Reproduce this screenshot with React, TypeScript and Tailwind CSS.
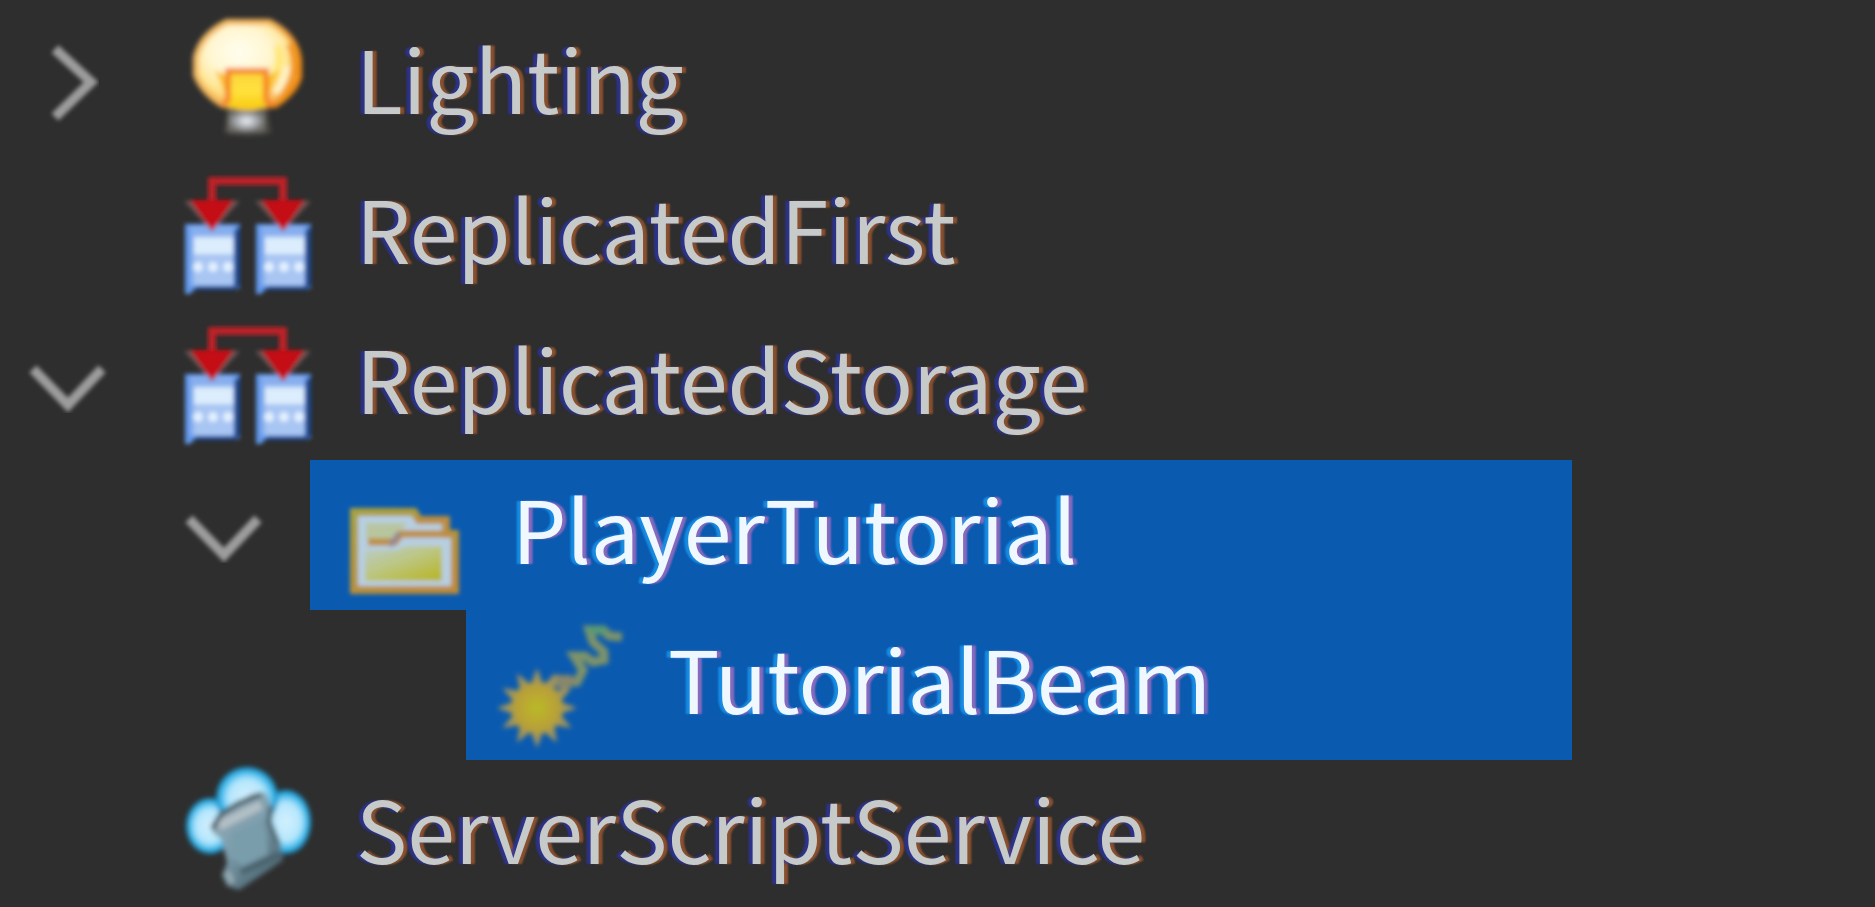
import { useState, type ReactNode } from "react";

type TreeNode = {
  name: string;
  icon: ReactNode;
  selected?: boolean;
  children?: TreeNode[];
  startOpen?: boolean;
};

const iconClass = "h-[126px] w-[126px] shrink-0 overflow-visible";

function BulbIcon() {
  return (
    <svg className={iconClass} viewBox="0 0 126 126" aria-hidden="true">
      <defs>
        <radialGradient id="bulbGlass" cx="0.42" cy="0.36" r="0.62">
          <stop offset="0" stopColor="#fffdf0" />
          <stop offset="0.5" stopColor="#fff6cf" />
          <stop offset="0.8" stopColor="#fee48c" />
          <stop offset="1" stopColor="#fbc060" />
        </radialGradient>
        <linearGradient id="bulbRim" x1="0" y1="0" x2="1" y2="0.5">
          <stop offset="0" stopColor="#f2bd6c" />
          <stop offset="0.6" stopColor="#f4b455" />
          <stop offset="1" stopColor="#ee8a18" />
        </linearGradient>
        <linearGradient id="bulbCore" x1="0" y1="0" x2="0" y2="1">
          <stop offset="0" stopColor="#fbd23c" />
          <stop offset="0.5" stopColor="#ffe23e" />
          <stop offset="1" stopColor="#f8c80c" />
        </linearGradient>
        <radialGradient id="bulbBase">
          <stop offset="0" stopColor="#f2f4fa" />
          <stop offset="0.5" stopColor="#b0b3b8" />
          <stop offset="1" stopColor="#6c6b67" />
        </radialGradient>
        <filter id="softBulb" x="-10%" y="-10%" width="120%" height="120%">
          <feGaussianBlur stdDeviation="2.4" />
        </filter>
      </defs>
      <g filter="url(#softBulb)">
        <path d="M43 91H82L86 117Q62 122 39 117Z" fill="#4c4a43" />
        <rect x="43" y="94" width="37" height="22" rx="3" fill="url(#bulbBase)" />
        <path
          d="M42 6H84Q111 19 114 44V61Q110 76 90 89H38Q18 77 11 59V41Q17 18 42 6Z"
          fill="url(#bulbGlass)"
          stroke="url(#bulbRim)"
          strokeWidth="6"
        />
        <path d="M104 28Q118 58 92 86" fill="none" stroke="#f39a22" strokeWidth="6" />
        <path d="M102 50Q100 66 90 77" fill="none" stroke="#fff3c5" strokeWidth="7" />
        <path d="M92 30Q98 48 88 62" fill="none" stroke="#ffe773" strokeWidth="7" />
        <path d="M30 54L43 60V84Z M95 54L82 60V84Z" fill="#fcc12c" />
        <path d="M43 55H81V91Q62 98 43 91Z" fill="url(#bulbCore)" />
        <path d="M37 89L43 84V55H81V84L89 89" fill="none" stroke="#f5872c" strokeWidth="6" />
      </g>
    </svg>
  );
}

function ServerBox({ x }: { x: number }) {
  return (
    <g transform={`translate(${x} 0)`}>
      <path d="M0 58H55V122L49 124H9L5 128H0Z" fill="#5e97ea" />
      <path d="M48 66L55 60V120L50 124H8L12 120H48Z" fill="#1d4991" />
      <rect x="5" y="60" width="44" height="60" fill="#86adee" />
      <rect x="9" y="69" width="39" height="50" fill="#a9c6f3" />
      <rect x="9" y="72" width="39" height="16" fill="#dcedfd" />
      <circle cx="13" cy="101" r="5" fill="#e2f0ff" />
      <circle cx="28" cy="101" r="5" fill="#e2f0ff" />
      <circle cx="43" cy="101" r="5" fill="#e2f0ff" />
    </g>
  );
}

function ReplicatedIcon() {
  return (
    <svg className={iconClass} viewBox="0 0 126 126" aria-hidden="true">
      <defs>
        <filter id="softBox" x="-10%" y="-10%" width="120%" height="125%">
          <feGaussianBlur stdDeviation="2" />
        </filter>
      </defs>
      <g filter="url(#softBox)">
        <ServerBox x={0} />
        <ServerBox x={71} />
        <path d="M27 40V15H98V40" fill="none" stroke="#bd2426" strokeWidth="8" />
        <path d="M-1 35H55L27 66Z M70 35H126L98 66Z" fill="#a07070" opacity="0.55" />
        <path d="M5 34H49L27 65Z M76 34H120L98 65Z" fill="#c51114" />
      </g>
    </svg>
  );
}

function FolderIcon() {
  return (
    <svg className={iconClass} viewBox="0 0 126 126" aria-hidden="true">
      <defs>
        <linearGradient id="folderFront" x1="0.1" y1="0" x2="0.9" y2="1">
          <stop offset="0" stopColor="#b9ccc6" />
          <stop offset="0.45" stopColor="#bcc683" />
          <stop offset="1" stopColor="#b8b526" />
        </linearGradient>
        <linearGradient id="folderRim" x1="0" y1="0" x2="0.6" y2="1">
          <stop offset="0" stopColor="#a9a13f" />
          <stop offset="1" stopColor="#bd8b38" />
        </linearGradient>
        <filter id="softFolder" x="-10%" y="-10%" width="120%" height="120%">
          <feGaussianBlur stdDeviation="2" />
        </filter>
      </defs>
      <g filter="url(#softFolder)">
        <path
          d="M13 46H73L78 54H105V68H114V124H13Z"
          fill="#b7cfe2"
          stroke="url(#folderRim)"
          strokeWidth="8"
        />
        <path d="M25 57H67L58 66L52 74H25Z" fill="#b8c69f" />
        <path d="M75 54H105V68H60L54 76H27" fill="none" stroke="#bd8d3f" strokeWidth="7" />
        <path d="M49 80L58 67" stroke="#948896" strokeWidth="5" />
        <path d="M24 84H56L64 80H101V115H24Z" fill="url(#folderFront)" />
      </g>
    </svg>
  );
}

const sunPoints = Array.from({ length: 24 }, (_, i) => {
  const radius = i % 2 === 0 ? 40 : 24;
  const angle = (i * Math.PI) / 12;
  return `${40 + radius * Math.cos(angle)},${92 + radius * Math.sin(angle)}`;
}).join(" ");

function BeamIcon() {
  return (
    <svg className={iconClass} viewBox="0 0 126 126" aria-hidden="true">
      <defs>
        <radialGradient id="beamSun">
          <stop offset="0" stopColor="#b8ba28" />
          <stop offset="0.6" stopColor="#bba632" />
          <stop offset="1" stopColor="#b09a42" />
        </radialGradient>
        <filter id="softBeam" x="-10%" y="-10%" width="120%" height="120%">
          <feGaussianBlur stdDeviation="2.4" />
        </filter>
      </defs>
      <g filter="url(#softBeam)">
        <path
          d="M60 66L80 66L86 54L77 40H88L96 46L107 44V36L96 26L92 14H106L112 20L125 21"
          fill="none"
          stroke="#7d936a"
          strokeWidth="9"
        />
        <path d="M54 59H74L80 65L68 75L56 69Z" fill="#89876a" />
        <path d="M90 10H110V18H90Z" fill="#5a9a72" />
        <polygon points={sunPoints} fill="#a3955a" />
        <circle cx="40" cy="92" r="26" fill="url(#beamSun)" />
      </g>
    </svg>
  );
}

function ServerScriptIcon() {
  return (
    <svg className={iconClass} viewBox="0 0 126 126" aria-hidden="true">
      <defs>
        <radialGradient id="cloudBlue">
          <stop offset="0" stopColor="#d3f0fe" />
          <stop offset="0.6" stopColor="#b4e6fc" />
          <stop offset="0.82" stopColor="#42bdee" />
          <stop offset="1" stopColor="#1187bd" />
        </radialGradient>
        <linearGradient id="scrollBody" x1="0" y1="0" x2="0.7" y2="1">
          <stop offset="0" stopColor="#9aabb3" />
          <stop offset="0.5" stopColor="#7f9fae" />
          <stop offset="1" stopColor="#4a646f" />
        </linearGradient>
        <filter id="softScript" x="-10%" y="-10%" width="120%" height="125%">
          <feGaussianBlur stdDeviation="2.6" />
        </filter>
      </defs>
      <g filter="url(#softScript)">
        <ellipse cx="25" cy="60" rx="24" ry="28" fill="url(#cloudBlue)" />
        <ellipse cx="101" cy="56" rx="25" ry="32" fill="url(#cloudBlue)" />
        <ellipse cx="62" cy="32" rx="31" ry="31" fill="url(#cloudBlue)" />
        <path
          d="M29 58L36 48L66 28L80 26L86 38L85 53L95 76L98 94L84 104L66 116L54 124L42 120L37 109L42 97L37 74L27 66Z"
          fill="url(#scrollBody)"
        />
        <path d="M46 66L74 54L81 68L83 88L58 100L44 90Z" fill="#7a9dac" />
        <path d="M34 60L52 51L76 39" fill="none" stroke="#b3c0c6" strokeWidth="9" />
        <path d="M27 63L36 48L54 37L76 28" fill="none" stroke="#4c5e67" strokeWidth="5" />
        <path d="M86 40L84 56L93 78" fill="none" stroke="#56707c" strokeWidth="6" />
        <path d="M42 106L47 117" fill="none" stroke="#93a9b0" strokeWidth="7" />
        <path d="M56 106L74 98L95 88" fill="none" stroke="#48616c" strokeWidth="6" />
      </g>
    </svg>
  );
}

function Chevron({ open }: { open: boolean }) {
  return (
    <svg className="h-[150px] w-[154px]" viewBox="0 0 154 150" aria-hidden="true">
      <filter id="softChevron" x="-20%" y="-20%" width="140%" height="140%">
        <feGaussianBlur stdDeviation="2" />
      </filter>
      <path
        d={open ? "M33 59L68 95L102 59" : "M55 39L91 72L55 107"}
        fill="none"
        stroke="#9c9c9c"
        strokeWidth="10"
        filter="url(#softChevron)"
      />
    </svg>
  );
}

const labelClass =
  "ml-[45px] whitespace-nowrap text-[86px] leading-[122px] [text-shadow:-4px_0_2px_#2c34a8c0,4px_0_2px_#a85c30c0] text-[#c6cac8]";
const selectedLabelClass =
  "ml-[45px] whitespace-nowrap text-[86px] leading-[122px] [text-shadow:-4px_0_2px_#1a9cf0c0,4px_0_2px_#b070c0c0] text-[#f0f8ff]";

function TreeItem({ node }: { node: TreeNode }) {
  const [open, setOpen] = useState(node.startOpen ?? false);
  return (
    <li role="treeitem" aria-selected={!!node.selected} aria-label={node.name}>
      <div className="flex h-[150px]">
        <div className="w-[154px] shrink-0">
          {node.children && (
            <button
              type="button"
              className="block"
              aria-label={`Toggle ${node.name}`}
              aria-expanded={open}
              onClick={() => setOpen(!open)}
            >
              <Chevron open={open} />
            </button>
          )}
        </div>
        <div
          className={
            node.selected
              ? "flex flex-1 items-start bg-[#0a5ab0] pt-1.5 pl-[31px]"
              : "flex flex-1 items-start pt-1.5 pl-[31px]"
          }
        >
          {node.icon}
          <span className={node.selected ? selectedLabelClass : labelClass}>{node.name}</span>
        </div>
      </div>
      {open && node.children && node.children.length > 0 && (
        <ul role="group" className="pl-[156px]">
          {node.children.map((child) => (
            <TreeItem key={child.name} node={child} />
          ))}
        </ul>
      )}
    </li>
  );
}

const services: TreeNode[] = [
  { name: "Lighting", icon: <BulbIcon />, children: [] },
  { name: "ReplicatedFirst", icon: <ReplicatedIcon /> },
  {
    name: "ReplicatedStorage",
    icon: <ReplicatedIcon />,
    startOpen: true,
    children: [
      {
        name: "PlayerTutorial",
        icon: <FolderIcon />,
        selected: true,
        startOpen: true,
        children: [{ name: "TutorialBeam", icon: <BeamIcon />, selected: true }],
      },
    ],
  },
  { name: "ServerScriptService", icon: <ServerScriptIcon /> },
];

export default function App() {
  return (
    <main className="h-screen overflow-hidden bg-[#2e2e2e] pt-[10px] pr-[303px] font-['Noto_Sans_CJK_SC','Noto_Sans',sans-serif]">
      <ul role="tree" aria-label="Explorer">
        {services.map((node) => (
          <TreeItem key={node.name} node={node} />
        ))}
      </ul>
    </main>
  );
}
